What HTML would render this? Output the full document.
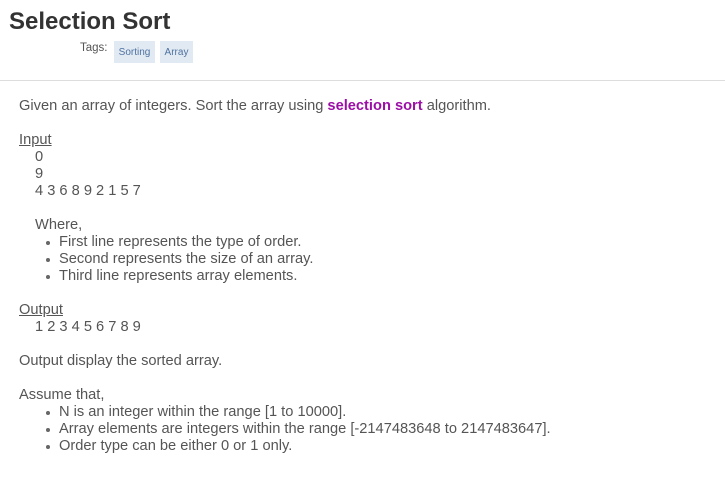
<!DOCTYPE html>
<html><head><meta charset="utf-8"><style>
body{margin:0;width:725px;height:477px;background:#fff;font-family:"Liberation Sans",sans-serif;color:#555;position:relative;overflow:hidden}
h1{position:absolute;left:9px;top:7px;margin:0;font-size:24px;font-weight:bold;color:#333;line-height:30px}
.tags{position:absolute;left:80px;top:42px;font-size:11.5px;color:#555}
.tag{position:absolute;top:41px;height:22px;line-height:23px;background:#e1eaf3;color:#4f72a0;font-size:10px;text-align:center}
hr{position:absolute;left:0;top:80px;width:725px;margin:0;border:0;border-top:1px solid #ddd}
.c{position:absolute;left:19px;top:97.5px;font-size:14.65px;line-height:17px}
.i{padding-left:16px}
.b{padding-left:40px;position:relative}
.b:before{content:"";position:absolute;left:27px;top:7px;width:4px;height:4px;border-radius:50%;background:#666}
u{text-decoration:underline}
.p{color:#9c0fa6;font-weight:bold}
</style></head><body>
<h1>Selection Sort</h1>
<div class="tags">Tags:</div>
<div class="tag" style="left:114px;width:41px">Sorting</div>
<div class="tag" style="left:160px;width:33px">Array</div>
<hr>
<div class="c">
<div>Given an array of integers. Sort the array using <span class="p">selection sort</span> algorithm.</div>
<div>&nbsp;</div>
<div><u>Input</u></div>
<div class="i">0</div>
<div class="i">9</div>
<div class="i">4 3 6 8 9 2 1 5 7</div>
<div>&nbsp;</div>
<div class="i">Where,</div>
<div class="b">First line represents the type of order.</div>
<div class="b">Second represents the size of an array.</div>
<div class="b">Third line represents array elements.</div>
<div>&nbsp;</div>
<div><u>Output</u></div>
<div class="i">1 2 3 4 5 6 7 8 9</div>
<div>&nbsp;</div>
<div>Output display the sorted array.</div>
<div>&nbsp;</div>
<div>Assume that,</div>
<div class="b">N is an integer within the range [1 to 10000].</div>
<div class="b">Array elements are integers within the range [-2147483648 to 2147483647].</div>
<div class="b">Order type can be either 0 or 1 only.</div>
</div>
</body></html>
